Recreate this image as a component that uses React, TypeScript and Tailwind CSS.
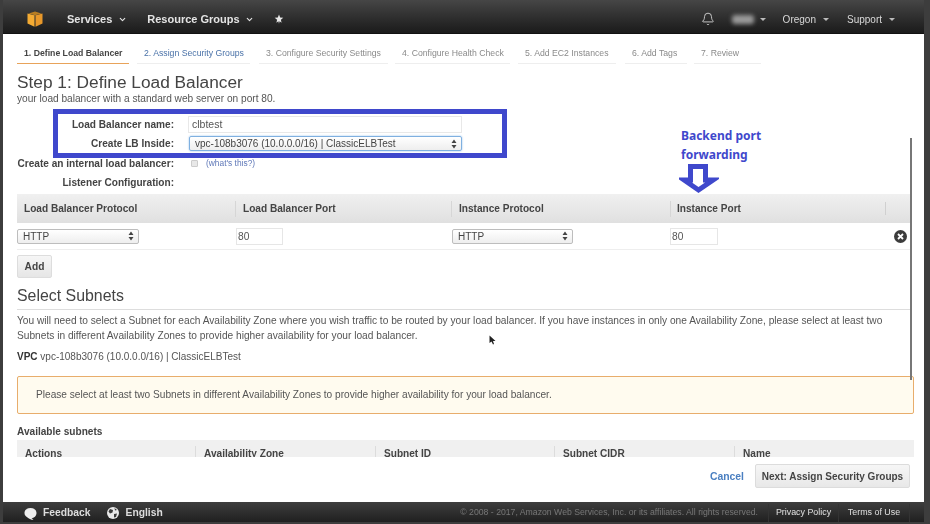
import React from 'react';
import { Bell, ChevronDown } from 'lucide-react';

const TABS = [
  { label: '1. Define Load Balancer', cls: 'w-[112px] mr-[8px] border-[#e8a35a] text-[#444] font-bold' },
  { label: '2. Assign Security Groups', cls: 'w-[113px] mr-[9px] border-[#eeeeee] text-[#4a72a8]' },
  { label: '3. Configure Security Settings', cls: 'w-[129px] mr-[7px] border-[#eeeeee] text-[#8a8a8a]' },
  { label: '4. Configure Health Check', cls: 'w-[115px] mr-[8px] border-[#eeeeee] text-[#8a8a8a]' },
  { label: '5. Add EC2 Instances', cls: 'w-[98px] mr-[9px] border-[#eeeeee] text-[#8a8a8a]' },
  { label: '6. Add Tags', cls: 'w-[62px] mr-[7px] border-[#eeeeee] text-[#8a8a8a]' },
  { label: '7. Review', cls: 'w-[67px] border-[#eeeeee] text-[#8a8a8a]' },
];

const SUBNET_COLS = [
  { label: 'Actions', cls: 'w-[178px]' },
  { label: 'Availability Zone', cls: 'w-[180px]' },
  { label: 'Subnet ID', cls: 'w-[179px]' },
  { label: 'Subnet CIDR', cls: 'w-[180px]' },
  { label: 'Name', cls: 'flex-1' },
];

const Caret = () => (
  <span className="inline-block w-0 h-0 border-x-[3px] border-x-transparent border-t-[3px] border-t-[#bbb]" />
);

const SelectArrows = () => (
  <svg width="6" height="10" viewBox="0 0 6 10" className="shrink-0">
    <path d="M3 0.5 L5.5 4 H0.5 Z M3 9.5 L0.5 6 H5.5 Z" fill="#444" />
  </svg>
);

function FakeSelect({ text, className }: { text: string; className: string }) {
  return (
    <div className={`h-[15px] flex items-center justify-between pl-[5px] pr-[4px] bg-gradient-to-b from-white to-[#eeeeee] rounded-[2px] text-[10px] text-[#444] ${className}`}>
      <span>{text}</span>
      <SelectArrows />
    </div>
  );
}

function FormRow({ label, children }: { label: string; children?: React.ReactNode }) {
  return (
    <div className="h-[19.25px] flex items-center">
      <div className="w-[157px] text-right font-bold text-[10.1px] text-[#444] whitespace-nowrap">{label}</div>
      <div className="ml-[14px] flex-1 flex items-center">{children}</div>
    </div>
  );
}

export default function App() {
  return (
    <div className="relative w-[930px] h-[524px] overflow-hidden bg-[#3d3d3d] pl-[3px] pr-[6px] pb-[2px] flex flex-col font-['Liberation_Sans',sans-serif]">
      <div className="flex-1 flex flex-col min-h-0 blur-[0.55px]">
        {/* Top nav */}
        <div className="h-[34px] shrink-0 pt-[5px] bg-gradient-to-b from-[#464646] to-[#1b1b1b] border-b border-[#111] flex items-center text-[#e4e4e4] text-[11px] font-bold">
          <svg width="16" height="16" viewBox="0 0 16 16" className="ml-[24px]">
            <path d="M8 4.5 L15.5 2.5 V12.5 L8.5 15.8 V5 Z" fill="#e8982a" />
            <path d="M8 4.5 L0.5 2.5 V12.5 L7.5 15.8 V5 Z" fill="#f4ab33" />
            <path d="M1.5 2.5 L8 0.5 L14.5 2.5 L8 4.2 Z" fill="#b87d22" />
          </svg>
          <div className="ml-[24px] flex items-center">
            Services
            <ChevronDown size={9} strokeWidth={3} className="ml-[6px]" />
          </div>
          <div className="ml-[20px] flex items-center">
            Resource Groups
            <ChevronDown size={9} strokeWidth={3} className="ml-[5px]" />
          </div>
          <svg width="10" height="10" viewBox="0 0 10 10" className="ml-[20px]">
            <path d="M5 0.5 L6.2 3.4 L9.3 3.7 L6.9 5.7 L7.6 8.8 L5.6 7.2 L5 9.8 L4.4 7.2 L2.4 8.8 L3.1 5.7 L0.7 3.7 L3.8 3.4 Z" fill="#e8e8e8" />
          </svg>
          <div className="ml-auto mr-[29px] flex items-center font-normal text-[10px] text-[#d8d8d8]">
            <Bell size={14} strokeWidth={1.5} className="mr-[17px]" />
            <span className="w-[22px] h-[9px] rounded-[3px] bg-[#9a9a9a] blur-[2px]" />
            <span className="ml-[6px] flex"><Caret /></span>
            <span className="ml-[17px]">Oregon</span>
            <span className="ml-[7px] flex"><Caret /></span>
            <span className="ml-[18px]">Support</span>
            <span className="ml-[7px] flex"><Caret /></span>
          </div>
        </div>

        {/* Main panel */}
        <div className="flex-1 min-h-0 bg-white overflow-hidden pl-[14px] pr-[10px] flex flex-col">
          <div className="h-[30px] shrink-0 flex items-end">
            {TABS.map((t) => (
              <div key={t.label} className={`h-[22px] border-b-[1.5px] px-[7px] text-[8.7px] leading-[23px] whitespace-nowrap ${t.cls}`}>
                {t.label}
              </div>
            ))}
          </div>
          <h1 className="mt-[8px] h-[21px] shrink-0 text-[17.3px] leading-[20px] text-[#444] whitespace-nowrap">Step 1: Define Load Balancer</h1>
          <p className="h-[12px] shrink-0 text-[10.15px] leading-[12px] text-[#555]">your load balancer with a standard web server on port 80.</p>

          <div className="mt-[10px] shrink-0">
            <FormRow label="Load Balancer name:">
              <div className="w-[274px] h-[17px] border border-[#e8e8e8] pl-[3px] text-[10.5px] leading-[15px] text-[#555]">clbtest</div>
            </FormRow>
            <FormRow label="Create LB Inside:">
              <FakeSelect text="vpc-108b3076 (10.0.0.0/16) | ClassicELBTest" className="w-[273px] ml-[1px] border border-[#7fb0e0] shadow-[0_0_2px_#8dbbe8]" />
            </FormRow>
            <FormRow label="Create an internal load balancer:">
              <div className="ml-[3px] w-[7px] h-[7px] rounded-[1px] bg-[#e8e8e8] border border-[#ccc]" />
              <span className="ml-[8px] text-[8.4px] text-[#5f78b8]">(what's this?)</span>
            </FormRow>
            <FormRow label="Listener Configuration:" />
          </div>

          {/* Listener table */}
          <div className="mt-[2px] mr-[2px] shrink-0">
            <div className="h-[29px] bg-gradient-to-b from-[#f0f0f0] to-[#e0e0e0] flex items-center text-[10.1px] font-bold text-[#444]">
              <div className="w-[218px] pl-[7px]">Load Balancer Protocol</div>
              <div className="w-[216px] h-[16px] leading-[16px] pl-[7px] border-l border-[#d6d6d6]">Load Balancer Port</div>
              <div className="w-[219px] h-[16px] leading-[16px] pl-[7px] border-l border-[#d6d6d6]">Instance Protocol</div>
              <div className="w-[215px] h-[16px] leading-[16px] pl-[6px] border-l border-[#d6d6d6]">Instance Port</div>
              <div className="flex-1 h-[13px] border-l border-[#d0d0d0]" />
            </div>
            <div className="h-[27px] border-b border-[#eeeeee] flex items-center text-[10.2px] text-[#555]">
              <div className="w-[219px]">
                <FakeSelect text="HTTP" className="w-[122px] border border-[#bdbdbd]" />
              </div>
              <div className="w-[216px]">
                <div className="w-[47px] h-[17px] border border-[#e6e6e6] pl-[1px] leading-[15px]">80</div>
              </div>
              <div className="w-[218px]">
                <FakeSelect text="HTTP" className="w-[121px] border border-[#bdbdbd]" />
              </div>
              <div className="w-[224px]">
                <div className="w-[48px] h-[17px] border border-[#e6e6e6] pl-[1px] leading-[15px]">80</div>
              </div>
              <svg width="13" height="13" viewBox="0 0 13 13">
                <circle cx="6.5" cy="6.5" r="6.5" fill="#3c3c3c" />
                <path d="M4 4 L9 9 M9 4 L4 9" stroke="#fff" strokeWidth="1.8" />
              </svg>
            </div>
          </div>

          <button className="mt-[5px] shrink-0 self-start w-[35px] h-[23px] rounded-[2px] border border-[#ddd] bg-gradient-to-b from-[#f6f6f6] to-[#e6e6e6] text-[10.2px] font-bold text-[#444]">Add</button>

          <h2 className="h-[32px] shrink-0 mr-[2px] border-b border-[#dddddd] pt-[9px] text-[15.9px] leading-[18px] text-[#444]">Select Subnets</h2>
          <p className="mt-[3px] shrink-0 text-[10.19px] leading-[15px] text-[#555] whitespace-nowrap">
            You will need to select a Subnet for each Availability Zone where you wish traffic to be routed by your load balancer. If you have instances in only one Availability Zone, please select at least two
            <br />
            Subnets in different Availability Zones to provide higher availability for your load balancer.
          </p>
          <div className="mt-[6px] h-[16px] shrink-0 text-[10px] leading-[16px] text-[#555]">
            <span className="font-bold text-[#333]">VPC</span> vpc-108b3076 (10.0.0.0/16) | ClassicELBTest
          </div>

          <div className="mt-[11px] h-[38px] shrink-0 rounded-[2px] border border-[#e8ad6c] bg-[#fffbef] pl-[18px] text-[10.15px] leading-[36px] text-[#555]">
            Please select at least two Subnets in different Availability Zones to provide higher availability for your load balancer.
          </div>

          <div className="mt-[10px] h-[16px] shrink-0 text-[10.1px] font-bold leading-[16px] text-[#444]">Available subnets</div>
          <div className="h-[28px] shrink-0 bg-[#f0f0f0] flex items-center text-[10.1px] font-bold text-[#444]">
            {SUBNET_COLS.map((c, i) => (
              <div key={c.label} className={`h-[16px] leading-[16px] pl-[8px] ${c.cls} ${i > 0 ? 'border-l border-[#dcdcdc]' : ''}`}>
                {c.label}
              </div>
            ))}
          </div>
        </div>

        {/* Wizard actions */}
        <div className="h-[45px] shrink-0 bg-white flex items-start justify-end pt-[7px] pr-[14px]">
          <a className="mt-[5px] mr-[11px] text-[10.4px] font-bold text-[#4a7fc1]">Cancel</a>
          <button className="w-[155px] h-[24px] rounded-[2px] border border-[#dcdcdc] bg-gradient-to-b from-[#f6f6f6] to-[#e8e8e8] text-[10px] font-bold text-[#444]">
            Next: Assign Security Groups
          </button>
        </div>

        {/* Footer */}
        <div className="h-[20px] shrink-0 pt-[2px] bg-gradient-to-b from-[#3e3e3e] to-[#202020] flex items-center text-[10.3px] font-bold text-[#dddddd]">
          <svg width="13" height="13" viewBox="0 0 13 13" className="ml-[21px]">
            <path d="M6.5 1 C10 1 12.5 3 12.5 6 C12.5 9 10 11 7.5 11 L9.5 12.8 C7 12.8 4.5 11.5 3.5 10.4 C1.5 9.5 0.5 8 0.5 6 C0.5 3 3 1 6.5 1 Z" fill="#eeeeee" />
          </svg>
          <span className="ml-[6px]">Feedback</span>
          <svg width="12" height="12" viewBox="0 0 12 12" className="ml-[16px]">
            <circle cx="6" cy="6" r="6" fill="#e8e8e8" />
            <path d="M3 2 L6 3 L5.5 5.5 L3 6.5 L1.5 4.5 Z M7 7 L10 6.5 L9 10 L7 10.5 Z M7.5 1 L10 3 L8 3.5 Z" fill="#3a3a3a" />
          </svg>
          <span className="ml-[7px]">English</span>
          <span className="ml-auto text-[8.7px] font-normal text-[#777]">© 2008 - 2017, Amazon Web Services, Inc. or its affiliates. All rights reserved.</span>
          <div className="ml-[10px] h-full w-[70px] border-l border-[#333] flex items-center justify-center text-[8.9px] font-normal text-[#e0e0e0]">Privacy Policy</div>
          <div className="h-full w-[72px] mr-[14px] border-x border-[#333] flex items-center justify-center text-[8.9px] font-normal text-[#e0e0e0]">Terms of Use</div>
        </div>
      </div>

      {/* Page scrollbar, over the panel */}
      <div className="absolute left-[910px] top-[138px] w-[2px] h-[242px] bg-[#777]" />

      {/* Annotations drawn on top of the screenshot */}
      <div className="absolute left-[53px] top-[109px] w-[454px] h-[49px] border-[5px] border-[#3f48cc]" />
      <div className="absolute left-[681px] top-[126px] text-[12px] leading-[19px] font-bold text-[#3f48cc] font-['Noto_Sans',sans-serif]">
        Backend port
        <br />
        forwarding
      </div>
      <svg width="40" height="30" viewBox="0 0 40 30" className="absolute left-[679px] top-[164px]">
        <path d="M11.5 2.5 H26.5 V16 H34 L19.5 26 L5 16 H11.5 Z" fill="#fff" stroke="#3f48cc" strokeWidth="5" />
      </svg>
      {/* Mouse cursor left in the frame */}
      <svg width="7" height="10" viewBox="0 0 7 10" className="absolute left-[489px] top-[335px]">
        <path d="M0.5 0.5 V8 L2.5 6.5 L4 9.5 L5 9 L4 6 H6.5 Z" fill="#222" />
      </svg>
    </div>
  );
}
